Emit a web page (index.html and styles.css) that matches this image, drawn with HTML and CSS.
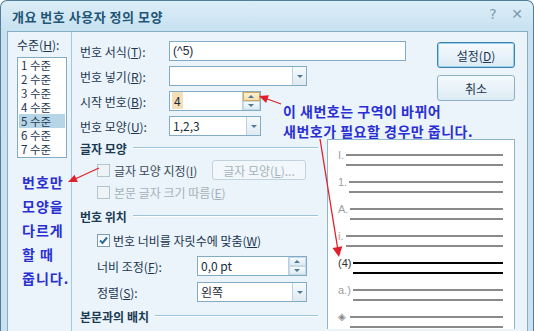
FILE: index.html
```html
<!DOCTYPE html>
<html>
<head>
    <meta charset="utf-8">
    <title>개요 번호 사용자 정의 모양</title>
    <link rel="stylesheet" href="styles.css">
</head>
<body>
<div class="window">
    <div class="titlebar">
        <span class="title">개요 번호 사용자 정의 모양</span>
        <span class="caption-btns">
            <span class="cap-btn">?</span>
            <span class="cap-btn">✕</span>
        </span>
    </div>

    <div class="client">
        <div class="levels">
            <div class="label">수준(<u>H</u>):</div>
            <ul class="listbox">
                <li>1 수준</li>
                <li>2 수준</li>
                <li>3 수준</li>
                <li>4 수준</li>
                <li class="selected">5 수준</li>
                <li>6 수준</li>
                <li>7 수준</li>
            </ul>
            <div class="note note-left">번호만<br>모양을<br>다르게<br>할 때<br>줍니다.</div>
        </div>

        <div class="main">
            <div class="top">
                <div class="fields">
                    <div class="row">
                        <label>번호 서식(<u>T</u>):</label>
                        <div class="input w237">(^5)</div>
                    </div>
                    <div class="row">
                        <label>번호 넣기(<u>R</u>):</label>
                        <div class="input combo w138"><span class="value"></span><span class="drop"></span></div>
                    </div>
                    <div class="row">
                        <label>시작 번호(<u>B</u>):</label>
                        <div class="input combo w92">
                            <span class="value"><span class="sel">4</span></span>
                            <span class="spin"><span class="up hot"></span><span class="down"></span></span>
                        </div>
                    </div>
                    <div class="row row-gap">
                        <label>번호 모양(<u>U</u>):</label>
                        <div class="input combo w92"><span class="value">1,2,3</span><span class="drop"></span></div>
                    </div>
                </div>
                <div class="buttons">
                    <button class="btn default">설정(<u>D</u>)</button>
                    <button class="btn">취소</button>
                </div>
            </div>

            <div class="bottom">
                <div class="groups">
                    <div class="group-head"><span>글자 모양</span><i></i></div>
                    <div class="check-row first">
                        <span class="check off"></span>
                        <span class="check-text">글자 모양 지정(<u>I</u>)</span>
                        <button class="btn small" disabled>글자 모양(<u>L</u>)...</button>
                    </div>
                    <div class="check-row second">
                        <span class="check off"></span>
                        <span class="check-text muted">본문 글자 크기 따름(<u>E</u>)</span>
                    </div>

                    <div class="group-head h2"><span>번호 위치</span><i></i></div>
                    <div class="check-row third">
                        <span class="check on">
                            <svg width="11" height="11" viewBox="0 0 11 11"><path d="M2 5.5 L4.5 8 L9 2.5" fill="none" stroke="#2d6d9c" stroke-width="2"/></svg>
                        </span>
                        <span class="check-text">번호 너비를 자릿수에 맞춤(<u>W</u>)</span>
                    </div>
                    <div class="field-row">
                        <label>너비 조정(<u>F</u>):</label>
                        <div class="input combo w110">
                            <span class="value">0,0 pt</span>
                            <span class="spin"><span class="up"></span><span class="down"></span></span>
                        </div>
                    </div>
                    <div class="field-row">
                        <label>정렬(<u>S</u>):</label>
                        <div class="input combo w110"><span class="value">왼쪽</span><span class="drop"></span></div>
                    </div>

                    <div class="group-head h3"><span>본문과의 배치</span><i></i></div>
                </div>

                <div class="preview">
                    <div class="entry"><span class="num">I.</span><div class="lines"><b></b><b></b></div></div>
                    <div class="entry"><span class="num">1.</span><div class="lines"><b></b><b></b></div></div>
                    <div class="entry"><span class="num">A.</span><div class="lines"><b></b><b></b></div></div>
                    <div class="entry"><span class="num">i.</span><div class="lines"><b></b><b></b></div></div>
                    <div class="entry current"><span class="num">(4)</span><div class="lines"><b></b><b></b></div></div>
                    <div class="entry"><span class="num">a.)</span><div class="lines"><b></b><b></b></div></div>
                    <div class="entry"><span class="num glyph">◈</span><div class="lines"><b></b><b></b></div></div>
                </div>
            </div>
        </div>
    </div>

    <div class="note note-top">이 새번호는 구역이 바뀌어<br>새번호가 필요할 경우만 줍니다.</div>

    <svg class="arrows" width="534" height="331" viewBox="0 0 534 331">
        <g stroke="#e0202c" stroke-width="1.3" fill="none">
            <line x1="281" y1="104" x2="266" y2="98.5"/>
            <line x1="99" y1="168" x2="75" y2="179"/>
            <line x1="320" y1="139" x2="337.6" y2="248"/>
        </g>
        <g fill="#e0202c">
            <polygon points="259,96 268.9,95.3 266.1,102.9"/>
            <polygon points="68,182 77.8,181.9 74.6,174.7"/>
            <polygon points="339,257 342.3,246.3 332.5,247.9"/>
        </g>
    </svg>
</div>
</body>
</html>
```

FILE: styles.css
```css
body {
    margin: 0;
    width: 534px;
    height: 331px;
    overflow: hidden;
    background: #fff;
    font-family: "Noto Sans CJK KR", "Liberation Sans", sans-serif;
    font-size: 12px;
    color: #1d3650;
}
u { text-decoration: underline; }

.window {
    position: relative;
    width: 532px;
    height: 330px;
    overflow: hidden;
    border: 1px solid #4f7f9c;
    border-bottom: none;
    border-radius: 7px 7px 0 0;
    background: linear-gradient(#dceef8, #c7e1ef 30px, #c9e2ef);
}
.titlebar {
    height: 30px;
    display: flex;
    align-items: center;
    padding: 0 0 0 11px;
}
.title {
    font-size: 13px;
    font-weight: bold;
    color: #1f5575;
    letter-spacing: 0.5px;
}
.caption-btns {
    margin-left: auto;
    display: flex;
    gap: 10px;
    padding-right: 9px;
    margin-top: -4px;
}
.cap-btn {
    font-family: "DejaVu Sans", sans-serif;
    font-size: 14px;
    color: #7d9bb0;
    width: 14px;
    text-align: center;
}

.client {
    display: flex;
    margin: 0 5px 0 6px;
    height: 299px;
    border: 1px solid #86afc7;
    border-bottom: none;
    background: #eaf4fa;
}

/* levels column */
.levels {
    width: 54px;
    padding-left: 9px;
    border-right: 1px solid #a7c7da;
}
.label {
    line-height: 16px;
    margin-top: 5px;
}
.listbox {
    list-style: none;
    margin: 4px 0 0 0;
    padding: 0 0 1px 0;
    width: 48px;
    border: 1px solid #82abc5;
    background: #fff;
}
.listbox li {
    height: 14px;
    line-height: 14px;
    font-size: 11.5px;
    padding-left: 2px;
    margin: 0 1px;
    white-space: nowrap;
    overflow: hidden;
}
.listbox li.selected { background: #b6d6e7; }

.note {
    font-weight: bold;
    color: #2a2fd4;
    font-size: 14px;
}
.note-left {
    margin: 12px 0 0 5px;
    line-height: 24px;
    letter-spacing: 1px;
}
.note-top {
    position: absolute;
    left: 282px;
    top: 100px;
    line-height: 20px;
    letter-spacing: 0.5px;
}

/* main column */
.main {
    flex: 1;
    padding: 9px 12px 0 8px;
}
.top { display: flex; }
.row {
    display: flex;
    align-items: center;
    height: 20px;
    margin-bottom: 5px;
}
.row-gap { margin-top: 2px; margin-bottom: 0; }
.row label { width: 89px; }

.input {
    box-sizing: border-box;
    height: 20px;
    border: 1px solid #82abc5;
    background: #fff;
    padding-left: 3px;
    line-height: 18px;
    font-family: "Liberation Sans", "Noto Sans CJK KR", sans-serif;
    color: #1a2a3a;
}
.w237 { width: 237px; }
.w138 { width: 138px; }
.w92 { width: 92px; }
.w110 { width: 110px; }

.combo {
    display: flex;
    padding-left: 0;
}
.combo .value {
    flex: 1;
    padding-left: 3px;
    font-family: "Noto Sans CJK KR", sans-serif;
}
.sel {
    background: #f4dfb8;
    padding: 0 2px;
    margin-left: -1px;
}
.drop {
    width: 13px;
    border-left: 1px solid #b9d1e0;
    background: linear-gradient(#f6fafd, #dfeaf2);
    position: relative;
}
.drop::after {
    content: "";
    position: absolute;
    left: 4px;
    top: 8px;
    border: 3px solid transparent;
    border-top: 3px solid #4c7a98;
    border-bottom: none;
}
.spin {
    width: 17px;
    display: flex;
    flex-direction: column;
    border-left: 1px solid #b9d1e0;
}
.spin span {
    flex: 1;
    position: relative;
    background: linear-gradient(#f6fafd, #dfeaf2);
    border: 1px solid #c6d9e6;
}
.spin .up.hot {
    background: linear-gradient(#fdf1d6, #f6dfa9);
    border-color: #d4a95c;
}
.spin span::after {
    content: "";
    position: absolute;
    left: 4px;
    top: 2px;
    border: 3px solid transparent;
}
.spin .up::after { border-bottom: 3px solid #4c7a98; border-top: none; }
.spin .down::after { border-top: 3px solid #4c7a98; border-bottom: none; }

.buttons {
    margin-left: auto;
    margin-top: 1px;
    display: flex;
    flex-direction: column;
    gap: 7px;
}
.btn {
    font-family: "Noto Sans CJK KR", sans-serif;
    font-size: 12px;
    color: #1d3650;
    width: 78px;
    height: 26px;
    padding: 0;
    border: 1px solid #8eb0c6;
    border-radius: 3px;
    background: linear-gradient(#f5fafd, #dcebf4);
}
.btn.default {
    border-color: #3f82b0;
    box-shadow: inset 0 0 0 1px #96d2ec;
}
.btn.small {
    width: 94px;
    height: 20px;
    margin-left: auto;
    color: #a7b3bb;
    border-color: #c3d3dd;
    background: #f1f7fa;
}

/* lower part */
.bottom {
    display: flex;
    margin-top: 3px;
}
.groups { width: 238px; }
.group-head {
    display: flex;
    align-items: center;
    height: 18px;
    font-weight: bold;
    color: #1b3a52;
}
.group-head i {
    flex: 1;
    margin-left: 6px;
    border-top: 1px solid #9fc3d7;
    border-bottom: 1px solid #fff;
}
.group-head.h2 { margin-top: 6px; }
.group-head.h3 { margin-top: 5px; }

.check-row {
    display: flex;
    align-items: center;
    padding-left: 17px;
    margin-right: 12px;
}
.check-row.first { height: 20px; margin-top: 3px; }
.check-row.second { height: 18px; margin-top: 3px; }
.check-row.third { height: 20px; margin-top: 5px; }
.check {
    box-sizing: border-box;
    width: 13px;
    height: 13px;
    border: 1px solid #7d9fb6;
    background: linear-gradient(#f3f7fa, #fff);
    display: flex;
    align-items: center;
    justify-content: center;
}
.check.off {
    border-color: #b4c4ce;
    background: #eef3f6;
}
.check-text { margin-left: 4px; color: #3c4b58; }
.check-text.muted { color: #a6b1b8; }
.check.on + .check-text { color: #1d3650; margin-left: 3px; }

.field-row {
    display: flex;
    align-items: center;
    height: 20px;
    margin-top: 6px;
    padding-left: 17px;
}
.field-row label { width: 100px; }

.preview {
    box-sizing: border-box;
    width: 188px;
    height: 190px;
    margin-left: auto;
    overflow: hidden;
    border: 1px solid #8fb5cb;
    border-bottom: none;
    background: #fff;
    padding: 8px 11px 0 10px;
}
.entry {
    display: flex;
    height: 27px;
}
.num {
    font-family: "Liberation Sans", sans-serif;
    font-size: 11px;
    line-height: 14px;
    color: #a0a0a0;
    margin-right: 2px;
}
.num.glyph {
    font-family: "DejaVu Sans", sans-serif;
    font-size: 10px;
    color: #888;
    margin-right: 4px;
}
.lines {
    flex: 1;
    padding-top: 6px;
}
.lines b {
    display: block;
    height: 2px;
    background: #8a8a8a;
    margin-bottom: 8px;
}
.current .num { color: #333; }
.current .lines b { background: #000; }

.arrows {
    position: absolute;
    left: -1px;
    top: -1px;
    pointer-events: none;
}
```
